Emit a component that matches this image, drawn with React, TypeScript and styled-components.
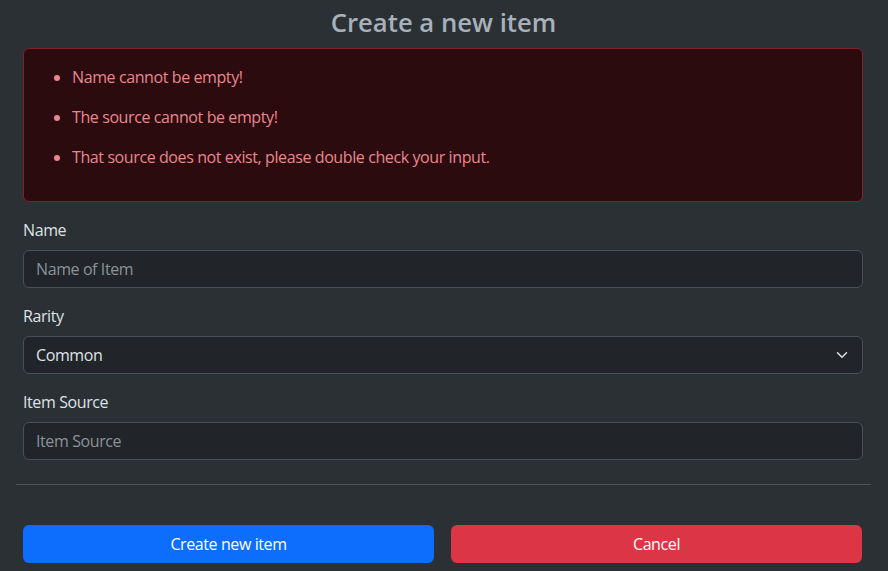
import React from 'react';
import styled, {createGlobalStyle} from 'styled-components';

const GlobalStyle = createGlobalStyle`
  * { box-sizing: border-box; }
  body {
    margin: 0;
    background: #2b3035;
    font-family: 'Open Sans', 'Noto Sans', sans-serif;
    font-size: 16px;
    letter-spacing: -0.4px;
    line-height: 1.5;
    color: #dee2e6;
  }
`;

const errors = [
  'Name cannot be empty!',
  'The source cannot be empty!',
  'That source does not exist, please double check your input.',
];

const Chevron = () => (
  <svg width="16" height="12" viewBox="0 0 16 16" fill="none">
    <path
      d="m2 5 6 6 6-6"
      stroke="#dee2e6"
      strokeWidth="2"
      strokeLinecap="round"
      strokeLinejoin="round"
    />
  </svg>
);

const App = () => {
  return (
    <Page>
      <GlobalStyle />
      <Title>Create a new item</Title>
      <Body>
        <Alert role="alert">
          <ErrorList>
            {errors.map(err => (
              <ErrorItem key={err}>{err}</ErrorItem>
            ))}
          </ErrorList>
        </Alert>
        <Field>
          <Label htmlFor="name">Name</Label>
          <Input id="name" placeholder="Name of Item" />
        </Field>
        <Field>
          <Label htmlFor="rarity">Rarity</Label>
          <SelectBox>
            <span>Common</span>
            <Chevron />
          </SelectBox>
        </Field>
        <Field>
          <Label htmlFor="source">Item Source</Label>
          <Input id="source" placeholder="Item Source" />
        </Field>
      </Body>
      <Divider />
      <Actions>
        <Button variant="primary">Create new item</Button>
        <Button variant="danger">Cancel</Button>
      </Actions>
    </Page>
  );
};

export default App;

const Page = styled.div`
  padding: 0 17px 0 16px;
`;

const Title = styled.h3`
  margin: 0;
  padding-top: 8px;
  height: 40px;
  text-align: center;
  font-size: 25.7px;
  font-weight: 600;
  letter-spacing: 0;
  line-height: 1.2;
  color: #a7b1bb;
`;

const Body = styled.div`
  padding: 8px 8px 0 7px;
  display: flex;
  flex-direction: column;
  gap: 16px;
`;

const Alert = styled.div`
  background: #2c0b0e;
  border: 1px solid #842029;
  border-radius: 6px;
  padding: 16px;
  color: #ea868f;
`;

const ErrorList = styled.ul`
  margin: 0;
  padding-left: 32px;
`;

const ErrorItem = styled.li`
  margin-bottom: 16px;
`;

const Field = styled.div`
  display: flex;
  flex-direction: column;
  gap: 8px;
`;

const Label = styled.label`
  color: #dee2e6;
`;

const Input = styled.input`
  height: 38px;
  padding: 6px 12px;
  font: inherit;
  letter-spacing: inherit;
  color: #dee2e6;
  background: #212529;
  border: 1px solid #495057;
  border-radius: 6px;
  outline: none;
  &::placeholder {
    color: #8b9198;
  }
`;

const SelectBox = styled.div`
  height: 38px;
  padding: 6px 12px;
  display: flex;
  align-items: center;
  justify-content: space-between;
  color: #dee2e6;
  background: #212529;
  border: 1px solid #495057;
  border-radius: 6px;
`;

const Divider = styled.hr`
  margin: 24px 0 0;
  border: 0;
  border-top: 1px solid #50555a;
`;

const Actions = styled.div`
  display: grid;
  grid-template-columns: 1fr 1fr;
  gap: 17px;
  padding: 40px 9px 0 7px;
`;

const Button = styled.button<{variant: 'primary' | 'danger'}>`
  height: 38px;
  border: 0;
  border-radius: 6px;
  font: inherit;
  letter-spacing: inherit;
  color: #fff;
  background: ${p => (p.variant === 'primary' ? '#0d6efd' : '#dc3545')};
`;
